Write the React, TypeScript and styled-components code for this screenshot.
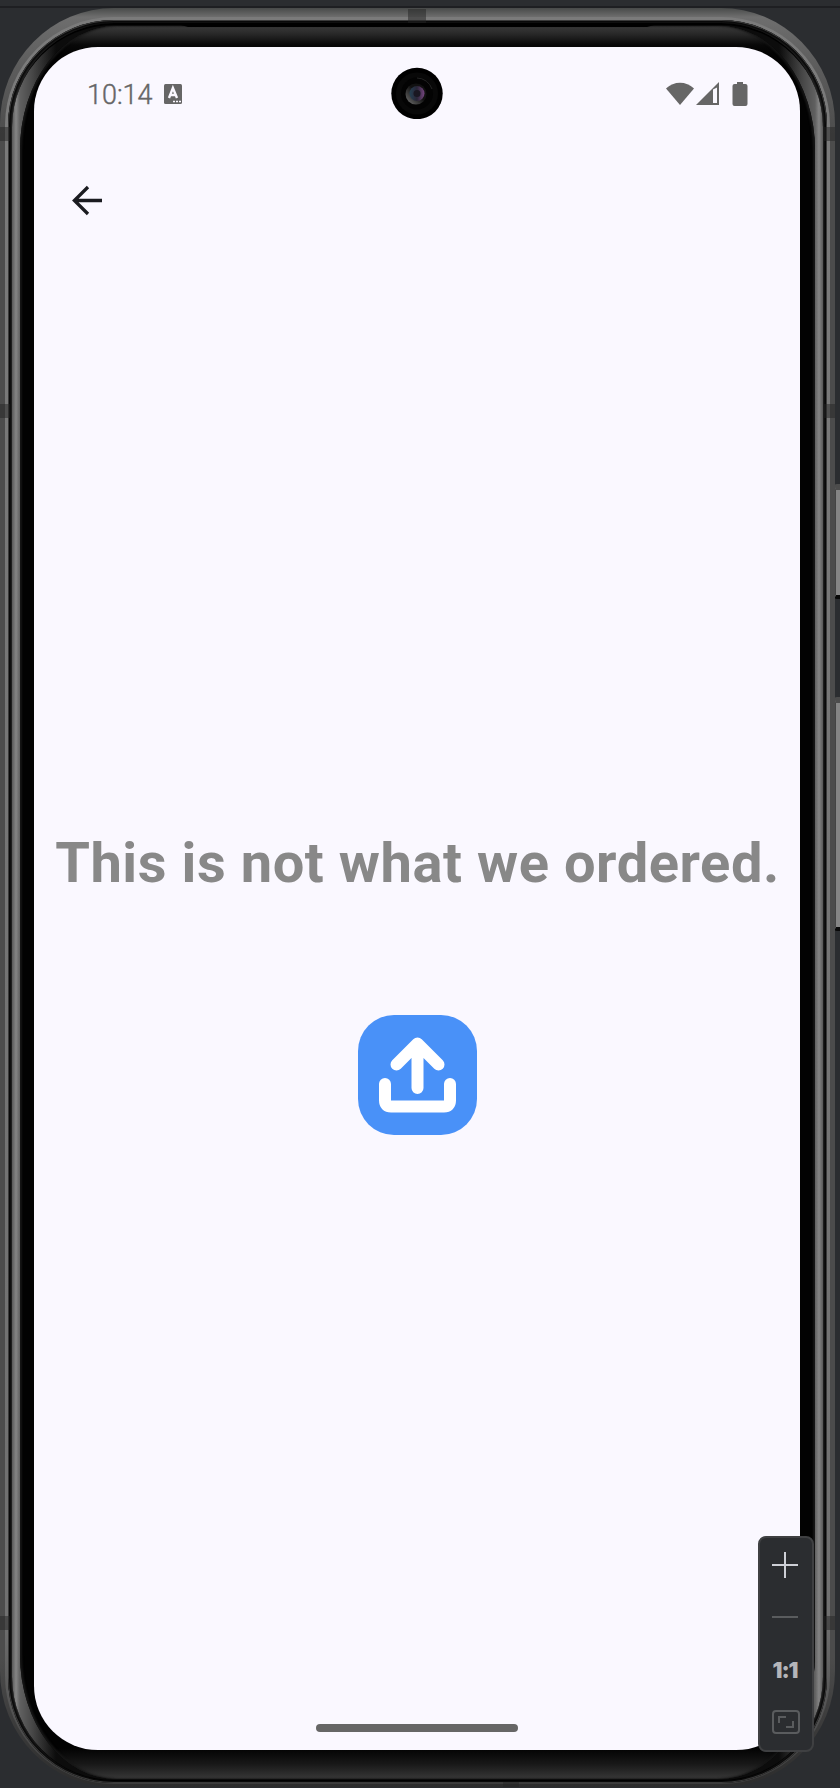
import React from 'react';
import styled, { createGlobalStyle } from 'styled-components';

const Global = createGlobalStyle`
  *, *::before, *::after { box-sizing: border-box; }
  html, body { margin: 0; background: #2b2d30; }
  body { width: 840px; height: 1788px; overflow: hidden; font-family: Roboto, sans-serif; }
`;

const Workspace = styled.main`
  position: relative;
  width: 840px;
  height: 1788px;
  overflow: hidden;
  background: linear-gradient(#2b2d30 6px, #1e1f22 6px, #1e1f22 8px, #2b2d30 8px);
`;

const SideButton = styled.span<{ $top: number; $height: number }>`
  position: absolute;
  right: 0;
  top: ${p => p.$top}px;
  width: 6px;
  height: ${p => p.$height}px;
  border-top: 6px solid #4c4c4c;
  border-bottom: 4px solid #080808;
  border-left: 2px solid #444;
  border-radius: 3px 0 0 3px;
  background: #858585;
`;

const OuterRim = styled.div`
  position: relative;
  width: 835px;
  height: 1779px;
  margin-top: 8px;
  padding: 9px 5px 3px;
  border-radius: 114px / 116px;
  background: linear-gradient(#484a49 0, #6e6e6e 9px, #5c5c5c 60px, #4c4c4c 130px, #4c4c4c 1650px, #2c2c2c 1779px);
`;

const BrightRim = styled.div`
  height: 100%;
  padding: 3px 3px 1px;
  border-radius: 109px / 108px;
  background: linear-gradient(#7b7b7b 0, #707070 1600px, #3c3c3c 1767px);
`;

const DarkRim = styled.div`
  height: 100%;
  padding: 3px 4px 2px;
  border-radius: 106px / 105px;
  background: #262626;
  box-shadow: inset 0 0 0 1px #3a3a3a, inset 0 0 2px 3px #080808;
`;

const PolishedEdge = styled.div`
  height: 100%;
  padding: 1px 8px 1px;
  border-radius: 102px / 104px;
  border: solid #000;
  border-width: 2px 0 1px;
  background: linear-gradient(90deg, #585858 0, #858585 4px, #606060 8px, #484848 20px, #0c0c0c 44px, #0c0c0c 767px, #484848 791px, #606060 803px, #858585 807px, #585858 811px);
`;

const Glass = styled.div`
  height: 100%;
  padding: 21px 14px 31px;
  border-radius: 96px / 124px;
  background: linear-gradient(#3a3a3a 0, #282828 8px, #080808 19px, #020202 28px, #020202 1722px, #181818 1738px, #3a3a3a 1754px);
  box-shadow: inset 2px 0 2px #161616, inset -2px 0 2px #161616;
`;

const Screen = styled.section`
  display: flex;
  flex-direction: column;
  width: 766px;
  height: 1703px;
  border-radius: 64px;
  background: #faf8ff;
`;

const StatusBar = styled.header`
  display: flex;
  align-items: center;
  gap: 1px;
  height: 94px;
  padding: 0 52px 0 53px;
  color: #666;
`;

const Clock = styled.time`
  width: 76px;
  padding-top: 1px;
  font-size: 27px;
  font-weight: 300;
  -webkit-text-stroke: 0.4px #666;
  line-height: 32px;
  white-space: nowrap;
`;

const StatusIcons = styled.div`
  display: flex;
  align-items: center;
  margin-left: auto;
`;

const Toolbar = styled.nav`
  height: 120px;
  padding: 43px 38px 0;
`;

const BackButton = styled.button`
  display: block;
  width: 30px;
  height: 32px;
  padding: 0;
  border: 0;
  background: none;
`;

const Content = styled.div`
  display: flex;
  flex: 1;
  flex-direction: column;
  align-items: center;
  padding-top: 569px;
`;

const Message = styled.h1`
  margin: 0;
  padding-left: 1px;
  color: #888;
  font-size: 56px;
  font-weight: 700;
  line-height: 66px;
  letter-spacing: 0.56px;
  white-space: nowrap;
`;

const UploadButton = styled.button`
  width: 119px;
  height: 120px;
  margin-top: 119px;
  padding: 0;
  border: 0;
  border-radius: 36px;
  background: #4991f8;
`;

const HomeIndicator = styled.div`
  align-self: center;
  width: 202px;
  height: 8px;
  margin-bottom: 18px;
  border-radius: 4px;
  background: #666;
`;

const Camera = styled.svg`
  position: absolute;
  left: 391px;
  top: 59px;
`;

const Antenna = styled.span<{ $x: number; $y: number; $w: number; $h: number }>`
  position: absolute;
  left: ${p => p.$x}px;
  top: ${p => p.$y}px;
  width: ${p => p.$w}px;
  height: ${p => p.$h}px;
  background: rgba(35, 35, 35, .5);
`;

const Speaker = styled.span`
  position: absolute;
  left: 174px;
  top: 15px;
  width: 487px;
  height: 4px;
  background: #000;
  clip-path: polygon(0 0, 100% 0, calc(100% - 14px) 100%, 14px 100%);
`;

const ZoomPanel = styled.aside`
  position: absolute;
  left: 758px;
  top: 1536px;
  display: flex;
  flex-direction: column;
  align-items: center;
  width: 56px;
  height: 216px;
  padding: 1px 2px 0 0;
  border: 2px solid #3f4042;
  border-radius: 8px;
  background: #2b2d30;
`;

const ZoomAction = styled.button<{ $muted?: boolean }>`
  display: flex;
  align-items: center;
  justify-content: center;
  width: 50px;
  height: 52px;
  padding: 0;
  border: 0;
  background: none;
  color: ${p => (p.$muted ? '#5a5c5e' : '#ced0d6')};
`;

const FitAction = styled(ZoomAction)`
  padding: 2px 0 0 2px;
`;

const Ratio = styled.span`
  padding-top: 2px;
  color: #b4b5b9;
  font: 900 22px/24px Inter, sans-serif;
  letter-spacing: -1px;
`;

export default function App() {
  return (
    <>
      <Global />
      <Workspace>
        <SideButton $top={484} $height={115} />
        <SideButton $top={697} $height={234} />
        <OuterRim>
          <BrightRim>
            <DarkRim>
              <PolishedEdge>
                <Glass>
                  <Screen>
                    <StatusBar>
                      <Clock>10:14</Clock>
                      <svg width="18" height="20" viewBox="0 0 18 20">
                        <rect width="18" height="20" rx="1.5" fill="#666" />
                        <path d="M5 14 8.900 4 13 14M6.300 11h5" fill="none" stroke="#faf8ff" strokeWidth="2.400" />
                        <path d="M9 17.500h2M12 17.500h2M15 17.500h2" stroke="#faf8ff" strokeWidth="1.500" />
                      </svg>
                      <StatusIcons>
                        <svg width="82" height="26" viewBox="0 0 82 26" fill="#666">
                          <path d="M0 7.500C8-.1 20-.1 28 7.500L14 24Z" />
                          <path fillRule="evenodd" d="M30 24 53 1v23ZM47 8.500V22h4V6.500Z" />
                          <path d="M71 1h6v2h2.500q2 0 2 2v18q0 2-2 2h-11q-2 0-2-2V5q0-2 2-2H71Z" />
                        </svg>
                      </StatusIcons>
                    </StatusBar>
                    <Toolbar>
                      <BackButton aria-label="Back">
                        <svg width="30" height="32" viewBox="0 0 30 32" fill="none" stroke="#1a1b20" strokeWidth="3.300">
                          <path d="M16 3 2.400 16.500 16 30M2.500 16.500H30" />
                        </svg>
                      </BackButton>
                    </Toolbar>
                    <Content>
                      <Message>This is not what we ordered.</Message>
                      <UploadButton aria-label="Upload">
                        <svg width="119" height="120" viewBox="0 0 119 120" fill="none" stroke="#fff" strokeWidth="12" strokeLinecap="round" strokeLinejoin="round">
                          <path d="M38.500 49.500 59.500 28.500 80.500 49.500M59.500 29V73M27 69V85.500Q27 91.500 33 91.500H86Q92 91.500 92 85.500V69" />
                        </svg>
                      </UploadButton>
                    </Content>
                    <HomeIndicator />
                  </Screen>
                </Glass>
              </PolishedEdge>
            </DarkRim>
          </BrightRim>
          <Speaker />
          <Antenna $x={408} $y={1} $w={18} $h={14} />
          <Antenna $x={0} $y={119} $w={10} $h={14} />
          <Antenna $x={824} $y={119} $w={11} $h={14} />
          <Antenna $x={0} $y={396} $w={10} $h={14} />
          <Antenna $x={824} $y={396} $w={11} $h={14} />
          <Antenna $x={0} $y={1608} $w={10} $h={14} />
          <Antenna $x={824} $y={1608} $w={11} $h={14} />
          <Antenna $x={503} $y={1774} $w={16} $h={5} />
          <Camera width="52" height="52" viewBox="0 0 52 52">
            <defs>
              <linearGradient id="barrel" x1="0" y1="1" x2="1" y2="0">
                <stop stopColor="#777" />
                <stop offset=".55" stopColor="#111" />
              </linearGradient>
              <linearGradient id="lens">
                <stop stopColor="#244052" />
                <stop offset=".5" stopColor="#292536" />
                <stop offset="1" stopColor="#75457f" />
              </linearGradient>
            </defs>
            <circle cx="26" cy="26.500" r="25.700" fill="#000" />
            <circle cx="26" cy="26.500" r="21" fill="#080808" />
            <circle cx="26" cy="26.500" r="16" fill="#030303" />
            <path d="M26 11a16 16 0 0 1 15 11" fill="none" stroke="#242424" />
            <circle cx="25" cy="27" r="10.500" fill="url(#barrel)" />
            <circle cx="26" cy="26.500" r="7.500" fill="url(#lens)" />
            <circle cx="26" cy="26.500" r="3.500" fill="#1a1722" />
          </Camera>
        </OuterRim>
        <ZoomPanel>
          <ZoomAction aria-label="Zoom in">
            <svg width="26" height="26" viewBox="0 0 26 26" stroke="currentColor" strokeWidth="2"><path d="M0 13h26M13 0v26" /></svg>
          </ZoomAction>
          <ZoomAction $muted aria-label="Zoom out">
            <svg width="26" height="2" viewBox="0 0 26 2"><path d="M0 1h26" stroke="currentColor" strokeWidth="2" /></svg>
          </ZoomAction>
          <ZoomAction><Ratio>1:1</Ratio></ZoomAction>
          <FitAction $muted aria-label="Fit to screen">
            <svg width="28" height="24" viewBox="0 0 28 24" fill="none" stroke="currentColor" strokeWidth="2">
              <rect x="1" y="1" width="26" height="22" rx="3" /><path d="M7 13V7h7M14 17h7v-6" />
            </svg>
          </FitAction>
        </ZoomPanel>
      </Workspace>
    </>
  );
}
